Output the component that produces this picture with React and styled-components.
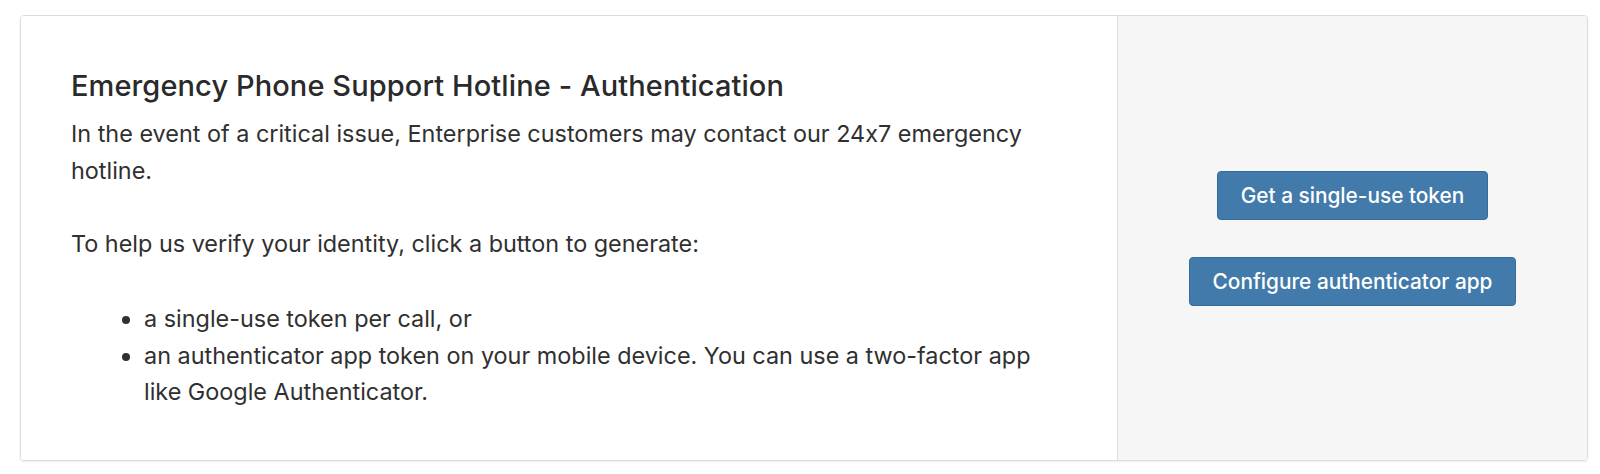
import React from 'react'
import styled, { createGlobalStyle } from 'styled-components'

const GlobalStyle = createGlobalStyle`
  body {
    margin: 0;
    background: #fff;
    font-family: Inter, "Noto Sans", sans-serif;
    font-feature-settings: "calt" 0;
    color: #333;
  }
`

const Page = styled.div`
  padding: 15px 12px 13px 20px;
`

const Card = styled.section`
  display: flex;
  height: 446px;
  box-sizing: border-box;
  border: 1px solid #dcdcdc;
  border-radius: 4px;
  box-shadow: 0 1px 2px rgba(0, 0, 0, 0.08);
  overflow: hidden;
`

const Info = styled.div`
  flex: 1;
  padding: 52px 60px 0 50px;
  background: #fff;
`

const Title = styled.h3`
  margin: 0 0 12px;
  font-size: 29px;
  line-height: 36px;
  font-weight: 500;
  letter-spacing: 0.1px;
  color: #2a2a2a;
`

const Text = styled.p`
  margin: 0 0 36.7px;
  font-size: 23.4px;
  line-height: 36.7px;
  color: #303030;
`

const List = styled.ul`
  margin: 38px 0 0;
  padding-left: 73px;
  font-size: 23.4px;
  line-height: 36.7px;
  color: #303030;
`

const Actions = styled.aside`
  width: 469px;
  flex-shrink: 0;
  display: flex;
  flex-direction: column;
  align-items: center;
  justify-content: center;
  gap: 37px;
  background: #f6f6f6;
  border-left: 1px solid #dcdcdc;
`

const ActionButton = styled.button`
  height: 49px;
  padding: 0 23px;
  border: 1px solid #376c9a;
  border-radius: 4px;
  background: #427bab;
  color: #fff;
  font-family: Inter, "Noto Sans", sans-serif;
  font-feature-settings: "calt" 0;
  font-size: 20.8px;
  font-weight: 500;
  cursor: pointer;
`

export default function App() {
  return (
    <>
      <GlobalStyle />
      <Page>
        <Card>
          <Info>
            <Title>Emergency Phone Support Hotline - Authentication</Title>
            <Text>
              In the event of a critical issue, Enterprise customers may contact our 24x7 emergency
              hotline.
            </Text>
            <Text>To help us verify your identity, click a button to generate:</Text>
            <List>
              <li>a single-use token per call, or</li>
              <li>
                an authenticator app token on your mobile device. You can use a two-factor app
                like Google Authenticator.
              </li>
            </List>
          </Info>
          <Actions>
            <ActionButton>Get a single-use token</ActionButton>
            <ActionButton>Configure authenticator app</ActionButton>
          </Actions>
        </Card>
      </Page>
    </>
  )
}
